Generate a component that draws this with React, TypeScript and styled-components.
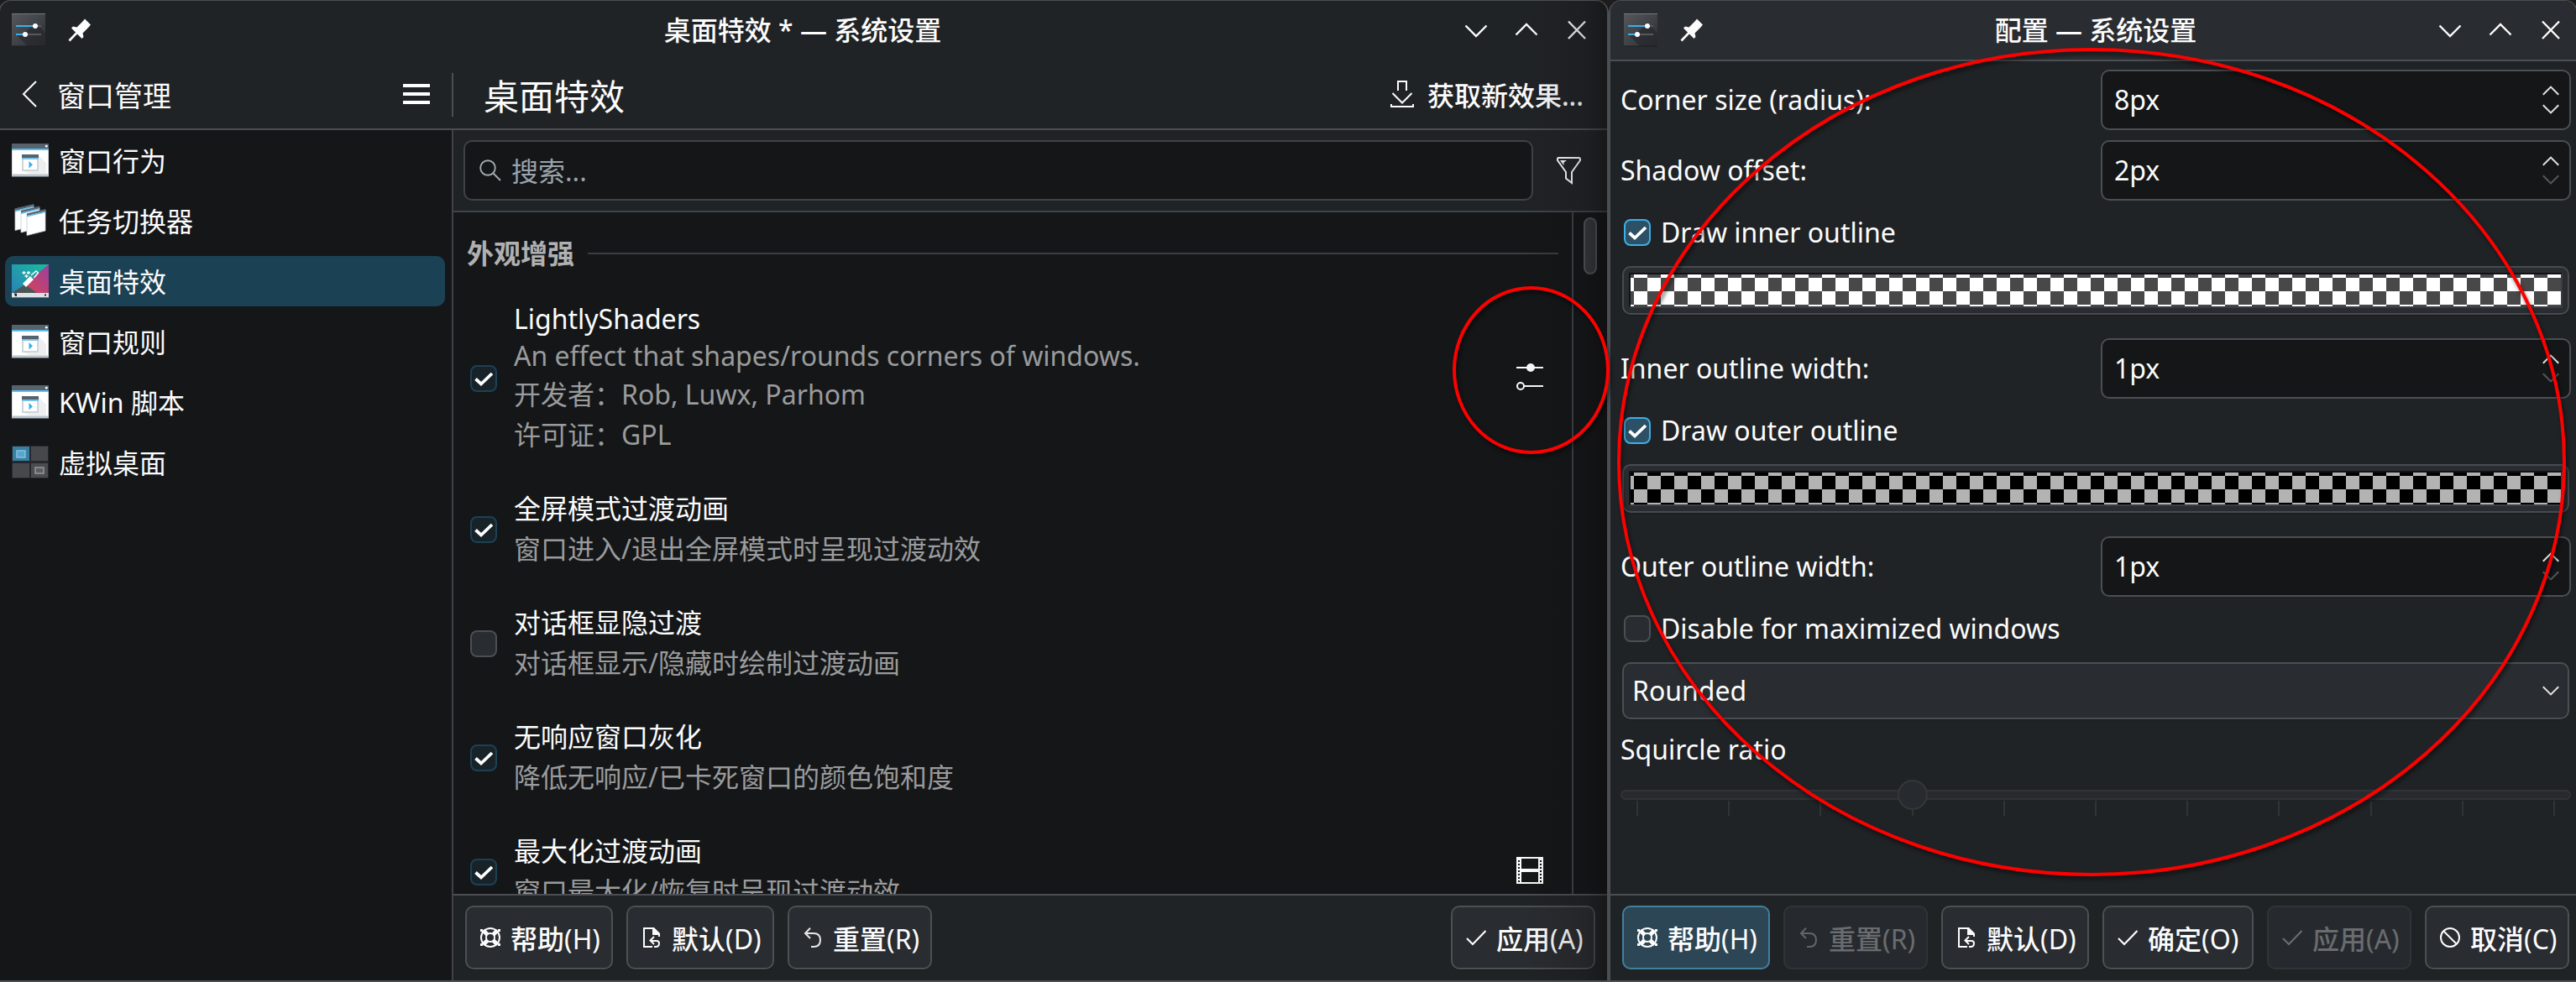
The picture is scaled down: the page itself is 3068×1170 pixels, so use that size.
import React from "react";
import styled, { createGlobalStyle, css } from "styled-components";

const c = {
  view: "#141618",
  window: "#202326",
  button: "#292c30",
  line: "#4b4e52",
  soft: "#404245",
  text: "#fcfcfc",
  dim: "#9a9b9c",
};

const Global = createGlobalStyle`
  * { box-sizing: border-box; }
  html, body { margin: 0; background: #1d1c1a; }
  body { overflow: hidden; }
  svg { display: block; flex: none; }
`;

const Desktop = styled.div`
  position: relative;
  display: flex;
  width: 3068px;
  height: 1170px;
  overflow: hidden;
  color: ${c.text};
  font-family: "Noto Sans", "Noto Sans CJK SC", sans-serif;
  font-size: 32px;
  line-height: 44px;
  white-space: nowrap;
`;

const Window = styled.section<{ $w: number; $pull?: boolean }>`
  display: flex;
  flex-direction: column;
  flex: none;
  width: ${(p) => p.$w}px;
  height: 1170px;
  margin-left: ${(p) => (p.$pull ? -2 : 0)}px;
  border: 2px solid ${c.line};
  border-top-width: 1px;
  border-radius: 15px 15px 0 0;
  background: ${c.window};
  overflow: hidden;
  position: relative;
`;

const CastShadow = styled.div`
  position: absolute;
  inset: 0 0 0 auto;
  width: 100px;
  pointer-events: none;
  background: linear-gradient(90deg, rgba(16, 12, 14, 0), rgba(16, 12, 14, 0.1) 45%, rgba(16, 12, 14, 0.2) 75%, rgba(12, 9, 10, 0.42));
`;

const TitleBar = styled.header<{ $tinted?: boolean }>`
  display: grid;
  grid-template-columns: 160px 1fr 160px;
  align-items: center;
  flex: none;
  height: ${(p) => (p.$tinted ? 72 : 70)}px;
  padding: 0 20px 0 14px;
  ${(p) => p.$tinted && css`background: ${c.button}; border-bottom: 2px solid ${c.line}; padding: 0 14px 0 16px;`}
`;

const TitleLeft = styled.div`
  display: flex;
  align-items: center;
  gap: 27px;
`;

const TitleText = styled.h1`
  margin: 0 0 0 4px;
  font-size: 32px;
  font-weight: 500;
  line-height: 44px;
  text-align: center;
`;

const TitleButtons = styled.div`
  display: flex;
  justify-content: flex-end;
  gap: 28px;
`;

const ToolRow = styled.div`
  display: flex;
  flex: none;
  height: 84px;
  border-bottom: 2px solid ${c.line};
`;

const SideHead = styled.div`
  display: flex;
  align-items: center;
  width: 538px;
  padding: 2px 26px 2px 24px;
  font-size: 34px;
`;

const SideTitle = styled.div`
  flex: 1;
  margin: 4px 0 0 20px;
`;

const ToolRule = styled.div`
  width: 2px;
  height: 52px;
  margin-top: 16px;
  background: ${c.line};
`;

const MainHead = styled.div`
  display: flex;
  flex: 1;
  align-items: center;
  justify-content: space-between;
  padding: 2px 28px 2px 36px;
`;

const PageTitle = styled.h2`
  margin: 6px 0 0;
  font-size: 42px;
  font-weight: 400;
  line-height: 56px;
`;

const ToolButton = styled.div`
  display: flex;
  align-items: center;
  gap: 16px;
  font-weight: 500;
`;

const ToolLabel = styled.span`
  margin-top: 4px;
`;

const Body = styled.div`
  display: flex;
  flex: 1;
  min-height: 0;
`;

const Sidebar = styled.nav`
  display: flex;
  flex-direction: column;
  gap: 12px;
  width: 540px;
  padding: 6px 8px 0 6px;
  border-right: 2px solid ${c.soft};
  background: ${c.view};
`;

const SideItem = styled.div<{ $on?: boolean }>`
  display: flex;
  align-items: center;
  gap: 12px;
  height: 60px;
  padding-left: 8px;
  border-radius: 10px;
  background: ${(p) => (p.$on ? "#1b4155" : "transparent")};
`;

const SideLabel = styled.span`
  margin-top: 2px;
`;

const Main = styled.main`
  display: flex;
  flex: 1;
  flex-direction: column;
  min-width: 0;
`;

const SearchRow = styled.div`
  display: flex;
  align-items: center;
  justify-content: space-between;
  flex: none;
  height: 98px;
  padding: 0 31px 0 12px;
  border-bottom: 2px solid #3f454a;
`;

const SearchBox = styled.div`
  display: flex;
  align-items: center;
  gap: 12px;
  width: 1274px;
  height: 72px;
  padding: 0 0 0 17px;
  border: 2px solid ${c.soft};
  border-radius: 10px;
  background: ${c.view};
  color: #9aa3aa;
`;

const ListArea = styled.div`
  display: flex;
  flex: 1;
  min-height: 0;
  background: ${c.view};
`;

const List = styled.div`
  flex: 1;
  overflow: hidden;
`;

const SectionHead = styled.div`
  display: flex;
  align-items: center;
  gap: 16px;
  height: 50px;
  margin: 24px 16px 11px 16px;
  color: #b0b0b0;
  font-weight: 700;

  &::after {
    content: "";
    flex: 1;
    height: 2px;
    background: #3b3d40;
  }
`;

const EffectRow = styled.article`
  display: flex;
  align-items: center;
  padding: 20px 34px 20px 20px;
`;

const EffectCheck = styled.div`
  padding-top: 2px;
`;

const EffectText = styled.div`
  flex: 1;
  margin-left: 20px;
`;

const Line = styled.div<{ $dim?: boolean; $latin?: boolean }>`
  height: ${(p) => (p.$latin ? 44 : 48)}px;
  line-height: ${(p) => (p.$latin ? 44 : 48)}px;
  color: ${(p) => (p.$dim ? c.dim : c.text)};
`;

const ScrollTrack = styled.div`
  display: flex;
  justify-content: center;
  width: 42px;
  padding-top: 6px;
  border-left: 2px solid ${c.soft};
`;

const ScrollThumb = styled.div`
  width: 16px;
  height: 68px;
  border: 2px solid #54565a;
  border-radius: 8px;
  background: #36383b;
`;

const Footer = styled.footer<{ $right?: boolean }>`
  display: flex;
  flex: none;
  gap: 16px;
  height: 103px;
  padding: ${(p) => (p.$right ? "12px 6px 0 14px" : "12px 14px 0 14px")};
  border-top: 2px solid ${c.line};
`;

type Tone = "normal" | "active" | "off";

const toneCss = {
  normal: css`background: ${c.button}; border-color: #4d5053; box-shadow: 0 1px 1px rgba(0,0,0,.25);`,
  active: css`background: #2d4655; border-color: #437f9f;`,
  off: css`background: #262a2e; border-color: #303337; color: #6a6c6f;`,
};

const PushButton = styled.button<{ $w: number; $tone: Tone }>`
  display: flex;
  align-items: center;
  gap: 12px;
  width: ${(p) => p.$w}px;
  height: 76px;
  padding: 0 0 0 16px;
  border: 2px solid;
  border-radius: 10px;
  color: ${c.text};
  font: inherit;
  font-weight: 500;
  white-space: nowrap;
  ${(p) => toneCss[p.$tone]}
`;

const ButtonText = styled.span`
  margin-top: 4px;
`;

const Key = styled.span`
  font-weight: 400;
`;

const Push = styled.div`
  flex: 1;
`;

const Box = styled.span<{ $look: "on" | "muted" | "off" }>`
  display: flex;
  align-items: center;
  justify-content: center;
  flex: none;
  width: 32px;
  height: 32px;
  border: 2px solid ${(p) => ({ on: "#3daee9", muted: "#1c4155", off: "#4b4e52" })[p.$look]};
  border-radius: 8px;
  background: ${(p) => ({ on: "#2c5065", muted: "#182329", off: "#292c30" })[p.$look]};
`;

const Form = styled.div`
  display: flex;
  flex: 1;
  flex-direction: column;
  padding: 10px 6px 0 12px;
`;

const Field = styled.div<{ $top?: number }>`
  display: flex;
  align-items: center;
  justify-content: space-between;
  height: 72px;
  margin-top: ${(p) => p.$top ?? 0}px;
`;

const Spin = styled.div`
  display: flex;
  align-items: center;
  justify-content: space-between;
  width: 560px;
  height: 72px;
  padding: 0 12px 0 14px;
  border: 2px solid ${c.line};
  border-radius: 10px;
  background: ${c.view};
`;

const Steps = styled.div`
  display: flex;
  flex-direction: column;
  gap: 10px;
`;

const CheckRow = styled.div`
  display: flex;
  align-items: center;
  gap: 12px;
  height: 44px;
  margin-top: 16px;
  padding-left: 4px;
`;

const ColorButton = styled.div`
  height: 58px;
  margin: 18px 2px 0;
  padding: 6px;
  border: 2px solid #484b4f;
  border-radius: 10px;
  background: ${c.button};
  box-shadow: 0 1px 1px rgba(0, 0, 0, 0.25);
`;

const Swatch = styled.div<{ $dark: string; $light: string }>`
  height: 42px;
  border: 2px solid;
  border-color: #101214 #3a3e43 #3a3e43 #101214;
  background: repeating-conic-gradient(${(p) => p.$dark} 0 25%, ${(p) => p.$light} 0 50%) -12px 4px / 32px 32px;
`;

const Combo = styled.div`
  display: flex;
  align-items: center;
  justify-content: space-between;
  height: 68px;
  margin: 18px 2px 0;
  padding: 0 10px;
  border: 2px solid ${c.line};
  border-radius: 10px;
  background: ${c.button};
  box-shadow: 0 1px 1px rgba(0, 0, 0, 0.25);
`;

const SliderLabel = styled.div`
  margin-top: 14px;
`;

const Slider = styled.div`
  position: relative;
  margin-top: 26px;
`;

const Groove = styled.div`
  height: 12px;
  border: 2px solid #303337;
  border-radius: 6px;
  background: #292a2e;
`;

const Ticks = styled.div`
  display: flex;
  justify-content: space-between;
  padding: 1px 19px 0;
`;

const Tick = styled.i`
  width: 2px;
  height: 18px;
  background: #303337;
`;

const Knob = styled.div`
  position: absolute;
  left: 330px;
  top: -12px;
  width: 36px;
  height: 36px;
  border: 2px solid #34373a;
  border-radius: 50%;
  background: #272a2e;
`;

const Annotation = styled.svg`
  position: absolute;
  inset: 0;
  pointer-events: none;
  filter: drop-shadow(2px 4px 2px rgba(0, 0, 0, 0.5));
`;

/* ---------- icons ---------- */

const AppIcon = () => (
  <svg width="40" height="40" viewBox="0 0 40 40">
    <defs>
      <linearGradient id="app" x1="0" y1="0" x2="1" y2="1">
        <stop offset="0" stopColor="#55575b" />
        <stop offset="1" stopColor="#2b2e32" />
      </linearGradient>
    </defs>
    <rect width="40" height="39" fill="url(#app)" />
    <path d="M7 27 L30 13 L40 23 V39 H19Z" fill="#232529" opacity=".6" />
    <path d="M0 .5H40" stroke="#77797c" />
    <path d="M0 39H40" stroke="#1c1e20" />
    <path d="M27 15H35M16 25H35" stroke="#56585c" strokeWidth="2" />
    <path d="M5 15H27M5 25H16" stroke="#3daee9" strokeWidth="2" />
    <circle cx="28" cy="15" r="3" fill="#fff" />
    <circle cx="16" cy="25" r="3" fill="#fff" />
  </svg>
);

const Pin = () => (
  <svg width="28" height="28" viewBox="0 0 28 28">
    <path d="M20 .5 L27 7.5 L24.5 10.5 L17.5 17.5 L18.5 22 L16.5 24 L4 11.5 L6 9.5 L10.5 10.5 L17.5 3.5Z" fill="#fcfcfc" />
    <path d="M11.5 16 L1.5 26.5" stroke="#fcfcfc" strokeWidth="2.6" />
  </svg>
);

const WinDown = () => (
  <svg width="32" height="32" viewBox="0 0 32 32"><path d="M3.5 10.5 L16 23 L28.5 10.5" fill="none" stroke="#fcfcfc" strokeWidth="2.4" /></svg>
);
const WinUp = () => (
  <svg width="32" height="32" viewBox="0 0 32 32"><path d="M3.5 21.5 L16 9 L28.5 21.5" fill="none" stroke="#fcfcfc" strokeWidth="2.4" /></svg>
);
const WinClose = () => (
  <svg width="32" height="32" viewBox="0 0 32 32"><path d="M6 5.5 L26 26 M26 5.5 L6 26" fill="none" stroke="#fcfcfc" strokeWidth="2.4" /></svg>
);

const Back = () => (
  <svg width="24" height="32" viewBox="0 0 24 32"><path d="M19 1 L4 16 L19 31" fill="none" stroke="#fcfcfc" strokeWidth="2" /></svg>
);
const Menu = () => (
  <svg width="32" height="24" viewBox="0 0 32 24"><path d="M0 2H32M0 12H32M0 22H32" stroke="#fff" strokeWidth="4" /></svg>
);
const Download = () => (
  <svg width="28" height="32" viewBox="0 0 28 32">
    <path d="M9 12V1H19V12M2.5 15L14 26.5L25.5 15M1 28V31H27V28" fill="none" stroke="#fcfcfc" strokeWidth="2" />
  </svg>
);
const Search = () => (
  <svg width="26" height="26" viewBox="0 0 26 26">
    <circle cx="10" cy="10" r="8.8" fill="none" stroke="#a1a9b1" strokeWidth="1.9" />
    <path d="M16 16L25 25" stroke="#a1a9b1" strokeWidth="2" />
  </svg>
);
const Filter = () => (
  <svg width="30" height="34" viewBox="0 0 30 34">
    <path d="M3 2H27Q29 2 29 4V5L19 19V32L12 26.5V19L2 5V4Q2 2 3 2Z" fill="none" stroke="#fcfcfc" strokeWidth="2" />
    <path d="M5 5H13L9.5 7.5L9.5 11Z" fill="#fcfcfc" />
  </svg>
);
const Configure = () => (
  <svg width="32" height="36" viewBox="0 0 32 36">
    <path d="M0 6H32M9 28H32" stroke="#fcfcfc" strokeWidth="2" />
    <circle cx="17" cy="6" r="5" fill="#fcfcfc" />
    <circle cx="5" cy="28" r="4" fill="none" stroke="#fcfcfc" strokeWidth="2" />
  </svg>
);
const Film = () => (
  <svg width="32" height="34" viewBox="0 0 32 34">
    <rect width="32" height="32" fill="#fcfcfc" />
    <path d="M6 2H26V14H6ZM6 18H26V30H6Z" fill="#141618" />
    <path d="M3 4V32M29 4V32" stroke="#141618" strokeWidth="2" strokeDasharray="2 2" />
  </svg>
);
const Check = () => (
  <svg width="24" height="24" viewBox="0 0 24 24"><path d="M2.5 12.5L9 18.5L22 6" fill="none" stroke="#fff" strokeWidth="3.8" /></svg>
);

const Arrow = ({ up, off, w = 20 }: { up?: boolean; off?: boolean; w?: number }) => (
  <svg width={w} height="12" viewBox="0 0 20 12">
    <path d={up ? "M.8 10.8L10 1.6L19.2 10.8" : "M.8 1.2L10 10.4L19.2 1.2"} fill="none" stroke={off ? "#55575a" : "#e2e2e2"} strokeWidth="2" />
  </svg>
);

const Lifebuoy = () => (
  <svg width="24" height="24" viewBox="0 0 24 24" fill="none" stroke="currentColor">
    <circle cx="12" cy="12" r="11" strokeWidth="2" />
    <circle cx="12" cy="12" r="5" strokeWidth="2" />
    <path d="M3.5 3.5L8.5 8.5M20.5 3.5L15.5 8.5M3.5 20.5L8.5 15.5M20.5 20.5L15.5 15.5" strokeWidth="5" />
    <path d="M0 3.5H3M21 3.5H24M0 20.5H3M21 20.5H24" strokeWidth="3" />
  </svg>
);
const DefaultsDoc = () => (
  <svg width="24" height="24" viewBox="0 0 24 24" fill="none" stroke="currentColor" strokeWidth="2">
    <path d="M14 1H3V23H13M15 23H17Q21 23 21 19Q21 16 18 16H11M15 11L10.5 15.5L15 20" />
    <path d="M13 0H15L22 7V11H20V9H13Z" fill="currentColor" stroke="none" />
  </svg>
);
const Undo = () => (
  <svg width="24" height="24" viewBox="0 0 24 24" fill="none" stroke="currentColor" strokeWidth="2" opacity=".9">
    <path d="M9 .8L3 7L9 13M3 7H13Q21 7 21 15Q21 23 13 23H10" />
  </svg>
);
const Tick2 = () => (
  <svg width="24" height="24" viewBox="0 0 24 24" fill="none" stroke="currentColor" strokeWidth="2.2">
    <path d="M1 13L8 20L23.5 4" />
  </svg>
);
const Cancel = () => (
  <svg width="24" height="24" viewBox="0 0 24 24" fill="none" stroke="currentColor" strokeWidth="2">
    <circle cx="12" cy="12" r="11" />
    <path d="M4.5 4.5L19.5 19.5" />
  </svg>
);

const WindowIcon = () => (
  <svg width="44" height="40" viewBox="0 0 44 40">
    <rect y="8" width="44" height="31" fill="#d7dde0" />
    <rect x="1" y="8" width="42" height="28" fill="#fff" />
    <rect y="37" width="44" height="2" fill="#bcc5c9" />
    <rect y="39" width="44" height="1" fill="#5b6770" />
    <rect width="44" height="6" fill="#56626c" />
    <rect y="6" width="44" height="2" fill="#5fbdee" />
    <circle cx="41.3" cy="3.2" r="1.4" fill="#fff" />
    <path d="M32 14L41 23V36H22L14 33L32 32Z" fill="#eceeef" />
    <rect x="12" y="13" width="20" height="20" fill="#cfd5d8" />
    <rect x="14" y="19" width="16" height="12" fill="#fff" />
    <rect x="12" y="13" width="20" height="4" fill="#56626c" />
    <rect x="12" y="17" width="20" height="2" fill="#7cc4ea" />
    <path d="M20.5 21L25 25.2L20.5 29.5Z" fill="#3daee9" />
  </svg>
);

const StackIcon = () => (
  <svg width="44" height="40" viewBox="0 0 44 40">
    {[[4, 2], [11, 4.5], [18, 8]].map(([x, y], i) => (
      <g key={i} transform={`translate(${x} ${y})`}>
        <path d="M0 4L22 -1V24L0 29.5Z" fill="#fff" stroke="#c5ced3" strokeWidth=".8" />
        <path d="M0 3.5L22 -2V.8L0 6Z" fill="#56626c" />
        <path d="M0 6L22 .8V2.2L0 7.6Z" fill="#5fbdee" />
      </g>
    ))}
  </svg>
);

const WandIcon = () => (
  <svg width="44" height="40" viewBox="0 0 44 40">
    <defs>
      <linearGradient id="wa" x1="0" y1="1" x2="1" y2="0">
        <stop offset="0" stopColor="#2980b9" />
        <stop offset="1" stopColor="#1abc9c" />
      </linearGradient>
      <linearGradient id="wb" x1="0" y1="1" x2="1" y2="0">
        <stop offset="0" stopColor="#da4453" />
        <stop offset="1" stopColor="#9b3fa0" />
      </linearGradient>
    </defs>
    <rect width="44" height="39" fill="url(#wa)" />
    <path d="M44 0V34H28L13 26Z" fill="url(#wb)" />
    <path d="M0 34L16 24L30 34Z" fill="#4a5657" />
    <rect y="34" width="44" height="5" fill="#dfe2e4" />
    <rect y="39" width="44" height="1" fill="#6c7a80" />
    <path d="M3 35.5H5V37H6M39 36.5H41" stroke="#232629" strokeWidth="2" fill="none" />
    <path d="M13 23L22 14L26 18L17 27Z" fill="#fff" />
    <path d="M23 13L29 8L31.5 10L26.5 16" fill="none" stroke="#fff" strokeWidth="1.4" />
    <path d="M14.5 8V12M12.5 10H16.5M20 8V12M18 10H22M17.5 12V16M15.5 14H19.5" stroke="#fff" strokeWidth="1.3" />
  </svg>
);

const DesktopsIcon = () => (
  <svg width="44" height="40" viewBox="0 0 44 40">
    <rect width="44" height="39" fill="#25292d" />
    <rect x="1" y="1" width="20" height="17" fill="#3880a3" />
    <rect x="23" y="1" width="20" height="17" fill="#47484b" />
    <rect x="1" y="21" width="20" height="17" fill="#47484b" />
    <rect x="23" y="21" width="20" height="17" fill="#4b4c50" />
    <rect x="6" y="6" width="10" height="8" fill="#57a6cd" stroke="#8ac4e0" strokeWidth="1.4" />
    <rect x="28" y="26" width="10" height="7" fill="#5c5e61" stroke="#9b9da0" strokeWidth="1.4" />
  </svg>
);

/* ---------- data ---------- */

const sideItems = [
  { icon: <WindowIcon />, label: "窗口行为" },
  { icon: <StackIcon />, label: "任务切换器" },
  { icon: <WandIcon />, label: "桌面特效", on: true },
  { icon: <WindowIcon />, label: "窗口规则" },
  { icon: <WindowIcon />, label: "KWin 脚本" },
  { icon: <DesktopsIcon />, label: "虚拟桌面" },
];

type Effect = { title: string; latin?: boolean; on: boolean; lines: { t: string; latin?: boolean }[]; action?: React.ReactNode };

const effects: Effect[] = [
  {
    title: "LightlyShaders",
    latin: true,
    on: true,
    lines: [
      { t: "An effect that shapes/rounds corners of windows.", latin: true },
      { t: "开发者：Rob, Luwx, Parhom" },
      { t: "许可证：GPL" },
    ],
    action: <Configure />,
  },
  { title: "全屏模式过渡动画", on: true, lines: [{ t: "窗口进入/退出全屏模式时呈现过渡动效" }] },
  { title: "对话框显隐过渡", on: false, lines: [{ t: "对话框显示/隐藏时绘制过渡动画" }] },
  { title: "无响应窗口灰化", on: true, lines: [{ t: "降低无响应/已卡死窗口的颜色饱和度" }] },
  { title: "最大化过渡动画", on: true, lines: [{ t: "窗口最大化/恢复时呈现过渡动效" }], action: <Film /> },
];

const Act = ({ icon, label, hot, w, tone = "normal" }: { icon: React.ReactNode; label: string; hot: string; w: number; tone?: Tone }) => (
  <PushButton $w={w} $tone={tone}>
    {icon}
    <ButtonText>{label}<Key>({hot})</Key></ButtonText>
  </PushButton>
);

const WindowTitle = ({ text, tinted }: { text: string; tinted?: boolean }) => (
  <TitleBar $tinted={tinted}>
    <TitleLeft><AppIcon /><Pin /></TitleLeft>
    <TitleText>{text}</TitleText>
    <TitleButtons><WinDown /><WinUp /><WinClose /></TitleButtons>
  </TitleBar>
);

const SpinField = ({ label, value, top, min }: { label: string; value: string; top?: number; min?: boolean }) => (
  <Field $top={top}>
    <span>{label}</span>
    <Spin>
      <span>{value}</span>
      <Steps><Arrow up /><Arrow off={min} /></Steps>
    </Spin>
  </Field>
);

const CheckField = ({ label, on }: { label: string; on?: boolean }) => (
  <CheckRow>
    <Box $look={on ? "on" : "off"}>{on && <Check />}</Box>
    <span>{label}</span>
  </CheckRow>
);

export default function App() {
  return (
    <>
      <Global />
      <Desktop>
        <Window $w={1918} $pull>
          <WindowTitle text="桌面特效 * — 系统设置" />
          <ToolRow>
            <SideHead>
              <Back />
              <SideTitle>窗口管理</SideTitle>
              <Menu />
            </SideHead>
            <ToolRule />
            <MainHead>
              <PageTitle>桌面特效</PageTitle>
              <ToolButton><Download /><ToolLabel>获取新效果...</ToolLabel></ToolButton>
            </MainHead>
          </ToolRow>
          <Body>
            <Sidebar>
              {sideItems.map((s) => (
                <SideItem key={s.label} $on={s.on}>{s.icon}<SideLabel>{s.label}</SideLabel></SideItem>
              ))}
            </Sidebar>
            <Main>
              <SearchRow>
                <SearchBox><Search /><SideLabel>搜索...</SideLabel></SearchBox>
                <Filter />
              </SearchRow>
              <ListArea>
                <List>
                  <SectionHead>外观增强</SectionHead>
                  {effects.map((e) => (
                    <EffectRow key={e.title}>
                      <EffectCheck><Box $look={e.on ? "muted" : "off"}>{e.on && <Check />}</Box></EffectCheck>
                      <EffectText>
                        <Line $latin={e.latin}>{e.title}</Line>
                        {e.lines.map((l) => <Line key={l.t} $dim $latin={l.latin}>{l.t}</Line>)}
                      </EffectText>
                      {e.action}
                    </EffectRow>
                  ))}
                </List>
                <ScrollTrack><ScrollThumb /></ScrollTrack>
              </ListArea>
              <Footer>
                <Act icon={<Lifebuoy />} label="帮助" hot="H" w={176} />
                <Act icon={<DefaultsDoc />} label="默认" hot="D" w={176} />
                <Act icon={<Undo />} label="重置" hot="R" w={172} />
                <Push />
                <Act icon={<Tick2 />} label="应用" hot="A" w={172} />
              </Footer>
            </Main>
          </Body>
          <CastShadow />
        </Window>
        <Window $w={1154}>
          <WindowTitle text="配置 — 系统设置" tinted />
          <Form>
            <SpinField label="Corner size (radius):" value="8px" />
            <SpinField label="Shadow offset:" value="2px" top={12} min />
            <CheckField label="Draw inner outline" on />
            <ColorButton><Swatch $dark="#484848" $light="#ffffff" /></ColorButton>
            <SpinField label="Inner outline width:" value="1px" top={28} min />
            <CheckField label="Draw outer outline" on />
            <ColorButton><Swatch $dark="#000000" $light="#b3b3b3" /></ColorButton>
            <SpinField label="Outer outline width:" value="1px" top={28} min />
            <CheckField label="Disable for maximized windows" />
            <Combo><span>Rounded</span><Arrow /></Combo>
            <SliderLabel>Squircle ratio</SliderLabel>
            <Slider>
              <Groove />
              <Ticks>{Array.from({ length: 11 }, (_, i) => <Tick key={i} />)}</Ticks>
              <Knob />
            </Slider>
          </Form>
          <Footer $right>
            <Act icon={<Lifebuoy />} label="帮助" hot="H" w={176} tone="active" />
            <Act icon={<Undo />} label="重置" hot="R" w={172} tone="off" />
            <Act icon={<DefaultsDoc />} label="默认" hot="D" w={176} />
            <Act icon={<Tick2 />} label="确定" hot="O" w={180} />
            <Act icon={<Tick2 />} label="应用" hot="A" w={172} tone="off" />
            <Act icon={<Cancel />} label="取消" hot="C" w={172} />
          </Footer>
        </Window>
        <Annotation width="3068" height="1170" viewBox="0 0 3068 1170">
          <g fill="none" stroke="#fe0000" strokeWidth="4">
            <ellipse cx="1823.5" cy="441" rx="91.5" ry="98" />
            <ellipse cx="2491" cy="550.5" rx="563" ry="491.5" />
          </g>
        </Annotation>
      </Desktop>
    </>
  );
}
